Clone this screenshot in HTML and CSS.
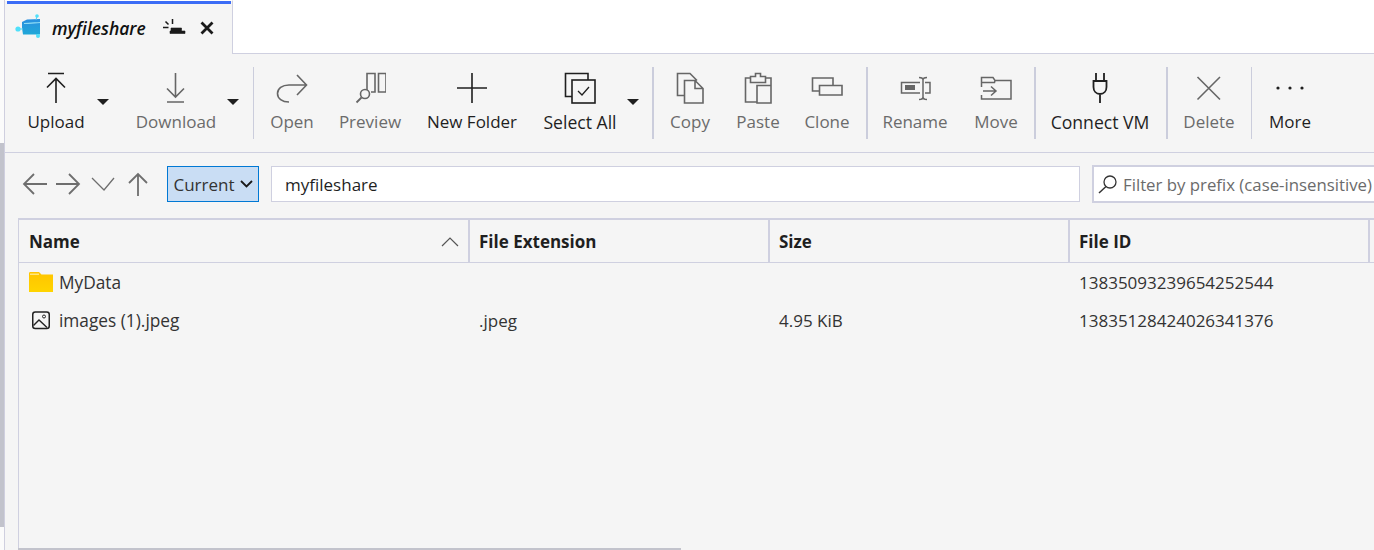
FILE: index.html
```html
<!DOCTYPE html>
<html lang="en">
<head>
<meta charset="utf-8">
<title>myfileshare</title>
<link rel="stylesheet" href="styles.css">
</head>
<body>
<div class="app">
  <div class="rail"><div class="rail-thumb"></div></div>
  <div class="main">
    <div class="tabs">
      <div class="tab">
        <svg class="tab-icon" width="26" height="26" viewBox="0 0 26 26"><defs><linearGradient id="fg" x1="0" y1="0" x2="0" y2="1"><stop offset="0" stop-color="#2a8fe0"/><stop offset="1" stop-color="#20a8d8"/></linearGradient></defs><path d="M7 8L12 5.500L25 5V20.500H8Q6.500 14 7 8Z" fill="url(#fg)"/><path d="M9 9.500C14 9.500 18 9 25 8.500" stroke="#8fdcf5" stroke-width="1.200" fill="none"/><path d="M3 15H8M22 2L21 6M21 20L23 22" stroke="#50d0f0" stroke-width="1" fill="none"/><circle cx="3" cy="15" r="2.600" fill="#50e0fa"/><circle cx="22" cy="2" r="1.800" fill="#50e0fa"/><circle cx="23" cy="22" r="2" fill="#50e0fa"/></svg>
        <span class="tab-title">myfileshare</span>
        <svg class="tab-pin" width="24" height="18" viewBox="0 0 24 18"><path d="M8 15.500H23V13H19.500V10H9V13H8Z" fill="#1a1a1a" stroke="#1a1a1a" stroke-width=".6"/><path d="M1 9.500H6.500M3.500 3.500L6.500 6.500M10.500 1V6" stroke="#1a1a1a" stroke-width="1.500" fill="none"/></svg>
        <svg class="tab-close" width="14" height="14" viewBox="0 0 14 14"><path d="M1.500 1.500 L12.500 12.500 M12.500 1.500 L1.500 12.500" stroke="#1a1a1a" stroke-width="2.800"/></svg>
      </div>
    </div>
    <div class="toolbar">
      <div class="tool w-up">
        <svg class="ico" width="32" height="36" viewBox="0 0 32 36"><path d="M8 1.500H24M16 31V6.500M7 15.500L16 6.500L25 15.500" fill="none" stroke="#1f1f1f" stroke-width="1.600"/></svg>
        <span class="lbl">Upload</span>
      </div>
      <div class="caret-wrap cw-up"><i class="caret"></i></div>
      <div class="tool dis w-down">
        <svg class="ico" width="32" height="36" viewBox="0 0 32 36"><path d="M7 30H24M15.500 1V25M7 16.500L15.500 25L24 16.500" fill="none" stroke="#666" stroke-width="1.600"/></svg>
        <span class="lbl">Download</span>
      </div>
      <div class="caret-wrap cw-down"><i class="caret"></i></div>
      <div class="sep thin s1"></div>
      <div class="tool dis w-open">
        <svg class="ico" width="32" height="36" viewBox="0 0 32 36"><path d="M30 13H13C6 13 1.500 16.500 1.500 21.500C1.500 26.500 6 30 13 30M21 3L30.500 13L21 23" fill="none" stroke="#666" stroke-width="1.600"/></svg>
        <span class="lbl">Open</span>
      </div>
      <div class="tool dis w-prev">
        <svg class="ico" width="32" height="36" viewBox="0 0 32 36"><path d="M13 18V1.500H21V20H17M24.500 1.500H32V20H24.500Z" fill="none" stroke="#666" stroke-width="1.600"/><circle cx="11" cy="22" r="4.500" fill="none" stroke="#666" stroke-width="1.600"/><path d="M7.500 25.500L2.500 30.500" stroke="#666" stroke-width="1.800"/></svg>
        <span class="lbl">Preview</span>
      </div>
      <div class="tool w-new">
        <svg class="ico" width="32" height="36" viewBox="0 0 32 36"><path d="M1 16H31M16 1V31" fill="none" stroke="#1f1f1f" stroke-width="1.600"/></svg>
        <span class="lbl">New Folder</span>
      </div>
      <div class="tool w-sel">
        <svg class="ico" width="32" height="36" viewBox="0 0 32 36"><path d="M8 24.500H1.500V1.500H24V8" fill="none" stroke="#1f1f1f" stroke-width="1.600"/><rect x="8" y="8" width="23" height="23" fill="none" stroke="#1f1f1f" stroke-width="1.600"/><path d="M14 19L18 23L25 15" fill="none" stroke="#1f1f1f" stroke-width="1.300"/></svg>
        <span class="lbl lbl-wide">Select All</span>
      </div>
      <div class="caret-wrap cw-sel"><i class="caret"></i></div>
      <div class="sep s2"></div>
      <div class="tool dis w-copy">
        <svg class="ico" width="32" height="36" viewBox="0 0 32 36"><path d="M10 23.500H3.500V1.500H16L23 8.500M10.500 8.500H21L29 16.500V31H10.500ZM21 8.500V16.500H29" fill="none" stroke="#666" stroke-width="1.600"/></svg>
        <span class="lbl">Copy</span>
      </div>
      <div class="tool dis w-paste">
        <svg class="ico" width="32" height="36" viewBox="0 0 32 36"><path d="M15 30H3.500V6H8.500M23.500 6H29V13M8.500 4.500H13.500V1.500H18.500V4.500H23.500V10.500H8.500ZM15 13.500H29V31H15Z" fill="none" stroke="#666" stroke-width="1.600"/></svg>
        <span class="lbl">Paste</span>
      </div>
      <div class="tool dis w-clone">
        <svg class="ico" width="32" height="36" viewBox="0 0 32 36"><path d="M8 19H1.500V6H22V13M8.500 13.500H31V23H8.500Z" fill="none" stroke="#666" stroke-width="1.600"/></svg>
        <span class="lbl">Clone</span>
      </div>
      <div class="sep s3"></div>
      <div class="tool dis w-ren">
        <svg class="ico" width="32" height="36" viewBox="0 0 32 36"><path d="M21 10.500H2.500V21H21M26 10.500H31V21H26M20 5.500C23 5.500 24 6.500 24 8V25C24 26.500 23 27.500 20 27.500M28 5.500C25 5.500 24 6.500 24 8M24 25C24 26.500 25 27.500 28 27.500" fill="none" stroke="#666" stroke-width="1.500"/><rect x="6" y="13" width="10" height="5" fill="#666"/></svg>
        <span class="lbl">Rename</span>
      </div>
      <div class="tool dis w-move">
        <svg class="ico" width="32" height="36" viewBox="0 0 32 36"><path d="M1.500 15V5.500H13L15 8.500H31V27H1.500V23M1.500 10.500H14.500L15 8.500M3 19H16M11 14.500L16 19L11 23.500" fill="none" stroke="#666" stroke-width="1.500"/></svg>
        <span class="lbl">Move</span>
      </div>
      <div class="sep s4"></div>
      <div class="tool w-vm">
        <svg class="ico" width="32" height="36" viewBox="0 0 32 36"><path d="M12 1V9M20 1V9M9.500 9H22.500V15C22.500 19 20 22 16 22C12 22 9.500 19 9.500 15ZM16 22V31" fill="none" stroke="#1f1f1f" stroke-width="1.800"/></svg>
        <span class="lbl lbl-wide">Connect VM</span>
      </div>
      <div class="sep s5"></div>
      <div class="tool dis w-del">
        <svg class="ico" width="32" height="36" viewBox="0 0 32 36"><path d="M4.500 5L27 27.500M27 5L4.500 27.500" fill="none" stroke="#666" stroke-width="1.600"/></svg>
        <span class="lbl">Delete</span>
      </div>
      <div class="sep thin s6"></div>
      <div class="tool w-more">
        <svg class="ico" width="32" height="36" viewBox="0 0 32 36"><circle cx="4" cy="16" r="1.600" fill="#1f1f1f"/><circle cx="16" cy="16" r="1.600" fill="#1f1f1f"/><circle cx="28" cy="16" r="1.600" fill="#1f1f1f"/></svg>
        <span class="lbl">More</span>
      </div>
    </div>
    <div class="nav">
      <svg class="nav-btn" width="26" height="26" viewBox="0 0 26 26"><path d="M25 13H2M12 3L2 13L12 23" fill="none" stroke="#6e6e6e" stroke-width="1.800"/></svg>
      <svg class="nav-btn" width="26" height="26" viewBox="0 0 26 26"><path d="M1 13H24M14 3L24 13L14 23" fill="none" stroke="#6e6e6e" stroke-width="1.800"/></svg>
      <svg class="nav-btn nav-down" width="26" height="26" viewBox="0 0 26 26"><path d="M2 7L14 19L24 7" fill="none" stroke="#6e6e6e" stroke-width="1.300"/></svg>
      <svg class="nav-btn" width="22" height="26" viewBox="0 0 22 26"><path d="M11 25V3M2 12L11 3L20 12" fill="none" stroke="#6e6e6e" stroke-width="1.800"/></svg>
      <div class="scope"><span>Current</span><svg width="13" height="8" viewBox="0 0 13 8"><path d="M1 1L6.500 6.500L12 1" fill="none" stroke="#1a1a1a" stroke-width="1.800"/></svg></div>
      <div class="path">myfileshare</div>
      <div class="filter">
        <svg width="20" height="20" viewBox="0 0 20 20"><circle cx="12" cy="8" r="6" fill="none" stroke="#333" stroke-width="1.300"/><path d="M8 12.500L1 19" stroke="#333" stroke-width="1.500"/></svg>
        <span>Filter by prefix (case-insensitive)</span>
      </div>
    </div>
    <div class="grid">
      <div class="head">
        <div class="th c1">Name<svg class="sort" width="18" height="10" viewBox="0 0 18 10"><path d="M1 9L9 1L17 9" fill="none" stroke="#555" stroke-width="1.200"/></svg></div>
        <div class="th c2">File Extension</div>
        <div class="th c3">Size</div>
        <div class="th c4">File ID</div>
      </div>
      <div class="row">
        <div class="td c1"><svg class="ftype" width="24" height="20" viewBox="0 0 24 20"><defs><linearGradient id="fy" x1="0" y1="0" x2="0" y2="1"><stop offset="0" stop-color="#ffc400"/><stop offset="1" stop-color="#ffd400"/></linearGradient></defs><path d="M0 1.500C0 .500 .500 0 1.500 0H10L12.500 2.500H24V20H0Z" fill="url(#fy)"/><path d="M1 1.500H10V3H1Z" fill="#ffe680"/></svg>MyData</div>
        <div class="td c2"></div>
        <div class="td c3"></div>
        <div class="td c4">13835093239654252544</div>
      </div>
      <div class="row">
        <div class="td c1"><svg class="ftype" width="24" height="20" viewBox="0 0 24 20"><rect x="3.750" y="2" width="16.500" height="16.500" rx="2.500" fill="none" stroke="#222" stroke-width="1.500"/><path d="M4.500 15.500L10 10L18 17.500" fill="none" stroke="#222" stroke-width="1.400"/><circle cx="15" cy="6.500" r="1.500" fill="none" stroke="#222" stroke-width="1"/></svg>images (1).jpeg</div>
        <div class="td c2">.jpeg</div>
        <div class="td c3">4.95 KiB</div>
        <div class="td c4">13835128424026341376</div>
      </div>
      <div class="hscroll"></div>
    </div>
  </div>
</div>
</body>
</html>
```
FILE: styles.css
```css
* { box-sizing: border-box; }
html, body { margin: 0; height: 100%; overflow: hidden; }
body { font-family: "Open Sans", "Noto Sans", sans-serif; font-size: 17px; color: #1f1f1f; background: #f5f5f5; }
.app { display: flex; height: 550px; width: 1374px; overflow: hidden; }
.rail { width: 5px; background: #fbfbfb; border-right: 1px solid #cfcfdf; padding-top: 143px; flex: none; }
.rail-thumb { width: 4px; height: 384px; background: #c2c3cc; }
.main { flex: 1; min-width: 0; display: flex; flex-direction: column; background: #f5f5f5; }
.tabs { height: 54px; background: #fff; border-bottom: 1px solid #cfd0e0; flex: none; }
.tab { width: 228px; height: 54px; background: #f5f5f5; border-right: 1px solid #cfd0e0; border-top: 1px solid #fff; display: flex; align-items: center; padding: 2px 0 0 10px; position: relative; }
.tab::before { content: ""; position: absolute; left: 2px; right: 1px; top: 0; height: 3px; background: #3b6cf6; }
.tab-icon { flex: none; margin-top: -3px; }
.tab-title { font-style: italic; font-weight: 600; font-size: 17.500px; margin-left: 11px; color: #111; width: 110px; margin-top: -2px; flex: none; }
.tab-pin { flex: none; margin-left: 0; margin-top: -3px; }
.tab-close { flex: none; margin-left: 14px; margin-top: -1px; }
.toolbar { height: 99px; flex: none; border-bottom: 1px solid #cfd0e0; display: flex; align-items: flex-start; }
.tool { display: flex; flex-direction: column; align-items: center; padding-top: 18px; flex: none; }
.ico { display: block; flex: none; }
.lbl { font-size: 17px; line-height: 24px; margin-top: 2px; white-space: nowrap; }
.lbl-wide { font-size: 17.600px; }
.dis .lbl { color: #6b6b6b; }
.caret-wrap { flex: none; padding-top: 45px; }
.caret { display: block; width: 0; height: 0; border-left: 6px solid transparent; border-right: 6px solid transparent; border-top: 6px solid #1f1f1f; }
.sep { flex: none; width: 2px; height: 72px; margin-top: 13px; background: #cbcddc; }
.sep.thin { width: 1px; }
.w-up { width: 102px; }
.w-down { width: 100px; }
.w-open { width: 76px; }
.w-prev { width: 80px; }
.w-new { width: 124px; }
.w-sel { width: 92px; }
.w-copy { width: 72px; }
.w-paste { width: 64px; }
.w-clone { width: 74px; }
.w-ren { width: 94px; }
.w-move { width: 68px; }
.w-vm { width: 128px; }
.w-del { width: 82px; }
.w-more { width: 76px; }
.cw-up { margin-left: -10px; margin-right: 17px; }
.cw-down { margin-left: 1px; margin-right: 14px; }
.cw-sel { margin-left: 1px; margin-right: 13px; }
.s3 { margin-left: 2px; }
.s4 { margin-left: 4px; }
.s5 { margin-left: 2px; }
.s6 { margin-left: 1px; }
.nav { height: 65px; flex: none; display: flex; align-items: center; padding-left: 17px; padding-bottom: 3px; }
.nav-btn { flex: none; margin-right: 7px; }
.nav-down { margin-left: 2px; margin-right: 11px; }
.scope { flex: none; margin-left: 11px; width: 92px; height: 36px; background: #c9ddf4; border: 1px solid #0078d4; display: flex; align-items: center; justify-content: center; gap: 5px; font-size: 17px; color: #333; }
.path { flex: none; margin-left: 12px; width: 809px; height: 36px; background: #fff; border: 1px solid #cfd0e0; padding-left: 13px; display: flex; align-items: center; font-size: 17px; }
.filter { flex: none; margin-left: 12px; width: 290px; height: 38px; background: #fff; border: 2px solid #cfd0e0; border-right: 0; display: flex; align-items: center; padding-left: 4px; gap: 5px; white-space: nowrap; color: #6b6b6b; font-size: 16.800px; overflow: hidden; }
.grid { flex: 1; margin-left: 13px; border-left: 1px solid #cfd0e0; position: relative; min-height: 0; }
.head { display: flex; height: 45px; border-top: 2px solid #cfd0e0; border-bottom: 1px solid #cfd0e0; }
.th { font-weight: 700; font-size: 17px; display: flex; align-items: center; padding-left: 9px; border-right: 2px solid #cfd0e0; position: relative; }
.c1 { width: 451px; flex: none; padding-left: 10px; }
.c2, .c3, .c4 { width: 300px; flex: none; }
.sort { position: absolute; right: 9px; top: 17px; }
.row { display: flex; height: 38px; align-items: center; }
.td { padding-left: 9px; display: flex; align-items: center; white-space: nowrap; font-size: 17px; color: #333; height: 38px; }
.td.c1 { padding-left: 10px; font-size: 17.300px; }
.ftype { flex: none; margin-right: 6px; }
.hscroll { position: absolute; left: -1px; bottom: 0; width: 663px; height: 2px; background: #c2c3cc; }
```
